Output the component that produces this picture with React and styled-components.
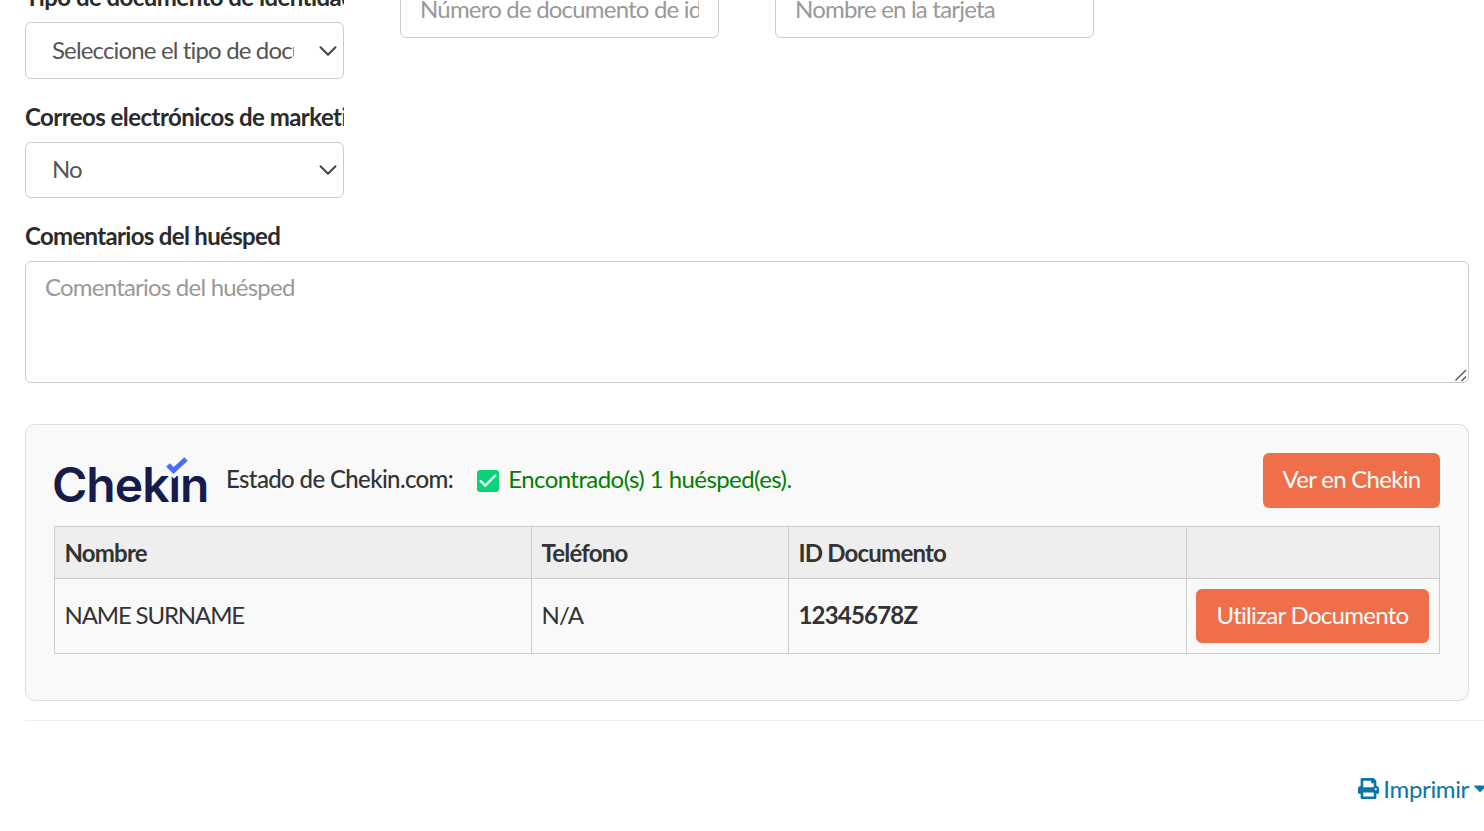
import React from "react";
import styled, { createGlobalStyle } from "styled-components";
import { FaPrint, FaCaretDown } from "react-icons/fa";
import { ChevronDown, Check } from "lucide-react";

const Global = createGlobalStyle`
  html, body { margin: 0; padding: 0; background: #fff; overflow: hidden; height: 831px; }
  body { font-family: Lato, "Liberation Sans", sans-serif; font-size: 24px; color: #333; letter-spacing: -0.75px; }
`;

const Page = styled.div`
  height: 831px;
  overflow: hidden;
  padding-left: 25px;
  display: flex;
  flex-direction: column;
`;

const Columns = styled.div`
  display: flex;
  gap: 56px;
  margin-top: -18px;
  align-items: flex-start;
`;

const Field = styled.div`
  width: 319px;
  display: flex;
  flex-direction: column;
`;

const Label = styled.label`
  display: block;
  height: 40px;
  line-height: 30px;
  font-weight: 700;
  letter-spacing: -0.55px;
  color: #2b2b2b;
  white-space: nowrap;
  overflow: hidden;
`;

const TextInput = styled.input`
  box-sizing: border-box;
  width: 319px;
  height: 56px;
  padding: 0 19px 4px;
  border: 1px solid #ccc;
  border-radius: 6px;
  background: #fff;
  font: inherit;
  letter-spacing: -0.8px;
  outline: none;
  &::placeholder { color: #999; opacity: 1; }
`;

const SelectWrap = styled.div`
  position: relative;
  width: 319px;
  height: ${(p) => p.$h}px;
`;

const Select = styled.select`
  appearance: none;
  box-sizing: border-box;
  width: 100%;
  height: 100%;
  padding: 0 49px 3px 26px;
  border: 1px solid #ccc;
  border-radius: 6px;
  background: #fff;
  color: #555;
  font: inherit;
  letter-spacing: -0.85px;
  outline: none;
`;

const Chevron = styled(ChevronDown)`
  position: absolute;
  right: 1px;
  top: 50%;
  width: 30px;
  height: 30px;
  margin-top: -15px;
  color: #444;
  pointer-events: none;
`;

const Block = styled.div`
  width: 319px;
  margin-top: ${(p) => p.$top || 0}px;
`;

const WideLabel = styled(Label)`
  margin-top: 21px;
  height: 42px;
  line-height: 34px;
  letter-spacing: -0.68px;
`;

const AreaWrap = styled.div`
  position: relative;
  width: 1444px;
  height: 122px;
`;

const Area = styled.textarea`
  box-sizing: border-box;
  display: block;
  width: 100%;
  height: 100%;
  padding: 10px 19px;
  border: 1px solid #ccc;
  border-radius: 6px;
  background: #fff;
  font: inherit;
  letter-spacing: -0.78px;
  outline: none;
  resize: none;
  &::placeholder { color: #999; opacity: 1; }
`;

const ResizeGrip = styled.svg`
  position: absolute;
  right: 1px;
  bottom: 1px;
  width: 14px;
  height: 14px;
  pointer-events: none;
`;

const Card = styled.section`
  box-sizing: border-box;
  width: 1444px;
  height: 277px;
  margin-top: 41px;
  padding: 28px 28px 0;
  background: #f9f9f9;
  border: 1px solid #ddd;
  border-radius: 10px;
`;

const CardHead = styled.div`
  display: flex;
  align-items: center;
  height: 55px;
  margin-bottom: 18px;
`;

const Logo = styled.svg`
  width: 158px;
  height: 55px;
  flex: none;
  margin-right: 14px;
`;

const Status = styled.strong`
  font-weight: 500;
  letter-spacing: -0.63px;
  color: #333;
  margin-right: 24px;
  margin-top: -4px;
`;

const CheckBox = styled.span`
  width: 22px;
  height: 22px;
  border-radius: 3px;
  background: #0ad377;
  color: #fff;
  display: flex;
  align-items: center;
  justify-content: center;
  margin-right: 9px;
`;

const Found = styled.span`
  color: #008000;
  letter-spacing: -0.57px;
  margin-top: -5px;
`;

const Button = styled.button`
  display: block;
  box-sizing: border-box;
  height: ${(p) => p.$h}px;
  width: ${(p) => p.$w}px;
  padding: 0 0 4px;
  border: none;
  border-radius: 6px;
  background: #ef6f4a;
  color: #fff;
  font: inherit;
  letter-spacing: -0.7px;
`;

const PushRight = styled.div`
  margin-left: auto;
`;

const Table = styled.table`
  border-collapse: collapse;
  table-layout: fixed;
  width: 1385px;
`;

const Th = styled.th`
  height: 52px;
  padding: 0 9.5px;
  background: #eee;
  border: 1px solid #ccc;
  text-align: left;
  font-weight: 700;
  letter-spacing: -0.8px;
  color: #333;
  width: ${(p) => p.$w}px;
  box-sizing: border-box;
`;

const Td = styled.td`
  height: 75px;
  padding: ${(p) => (p.$tight ? "0 9px" : "0 9.5px 3px")};
  border: 1px solid #ccc;
  font-weight: ${(p) => (p.$bold ? 700 : 400)};
  letter-spacing: ${(p) => p.$ls || -0.8}px;
  box-sizing: border-box;
`;

const Rule = styled.hr`
  margin: 19px 0 0;
  border: none;
  border-top: 1px solid #eee;
  width: 1459px;
`;

const PrintRow = styled.div`
  display: flex;
  justify-content: flex-end;
  align-items: center;
  margin-top: 51px;
  height: 32px;
  color: #0b76a6;
  gap: 4px;
  letter-spacing: -0.35px;
  white-space: nowrap;
`;

const PrintIcon = styled(FaPrint)`
  width: 21px;
  height: 21px;
`;

const Caret = styled(FaCaretDown)`
  width: 14px;
  height: 20px;
  margin-right: -3px;
`;

export default function App() {
  return (
    <Page>
      <Global />
      <Columns>
        <Field>
          <Label>Tipo de documento de identidad</Label>
          <SelectWrap $h={57}>
            <Select defaultValue="">
              <option value="">Seleccione el tipo de documento</option>
            </Select>
            <Chevron strokeWidth={1.6} />
          </SelectWrap>
        </Field>
        <Field>
          <TextInput placeholder="Número de documento de identidad" />
        </Field>
        <Field>
          <TextInput placeholder="Nombre en la tarjeta" />
        </Field>
      </Columns>
      <Block $top={23}>
        <Label>Correos electrónicos de marketing</Label>
        <SelectWrap $h={56}>
          <Select defaultValue="no">
            <option value="no">No</option>
          </Select>
          <Chevron strokeWidth={1.6} />
        </SelectWrap>
      </Block>
      <WideLabel as="label">Comentarios del huésped</WideLabel>
      <AreaWrap>
        <Area placeholder="Comentarios del huésped" />
        <ResizeGrip viewBox="0 0 14 14" aria-hidden="true">
          <path d="M1.5 12.5 L12 2 M7.5 13 L12 8.5" fill="none" stroke="#555" strokeWidth="1.4" />
        </ResizeGrip>
      </AreaWrap>
      <Card>
        <CardHead>
          <Logo viewBox="0 0 158 55" role="img" aria-label="Chekin">
            <text x="-2" y="49" fontFamily="Inter, sans-serif" fontWeight="600" fontSize="48" letterSpacing="-1" fill="#171a4d">Chekin</text>
            <path d="M114 12 L120 18 L132 6" fill="none" stroke="#f9f9f9" strokeWidth="11" />
            <path d="M114 12 L119.5 17.5 L132 6" fill="none" stroke="#4a6cf7" strokeWidth="5" />
          </Logo>
          <Status>Estado de Chekin.com:</Status>
          <CheckBox><Check size={22} strokeWidth={2.6} /></CheckBox>
          <Found>Encontrado(s) 1 huésped(es).</Found>
          <PushRight>
            <Button $w={177} $h={55}>Ver en Chekin</Button>
          </PushRight>
        </CardHead>
        <Table>
          <thead>
            <tr>
              <Th $w={477}>Nombre</Th>
              <Th $w={257}>Teléfono</Th>
              <Th $w={398}>ID Documento</Th>
              <Th $w={253}></Th>
            </tr>
          </thead>
          <tbody>
            <tr>
              <Td $ls={-1.15}>NAME SURNAME</Td>
              <Td>N/A</Td>
              <Td $bold>12345678Z</Td>
              <Td $tight><Button $w={233} $h={54}>Utilizar Documento</Button></Td>
            </tr>
          </tbody>
        </Table>
      </Card>
      <Rule />
      <PrintRow>
        <PrintIcon />
        <span>Imprimir</span>
        <Caret />
      </PrintRow>
    </Page>
  );
}
